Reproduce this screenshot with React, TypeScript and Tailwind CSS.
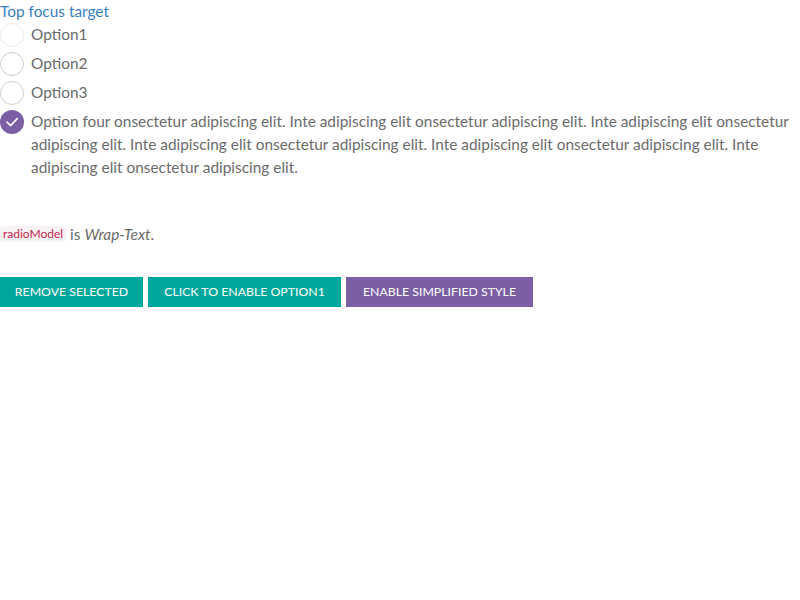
import React from "react";

function Radio({ label, checked, faint }: { label: string; checked?: boolean; faint?: boolean }) {
  return (
    <div className="flex items-start gap-[7px]">
      <div className="shrink-0 pt-[1px]">
        {checked ? (
          <div className="w-6 h-6 rounded-full bg-[#7b5ea3] flex items-center justify-center">
            <svg width="14" height="14" viewBox="0 0 14 14" fill="none">
              <path d="M2 7.2 L5.6 10.6 L12.2 3.6" stroke="white" strokeWidth="1.6" strokeLinecap="round" strokeLinejoin="round" />
            </svg>
          </div>
        ) : (
          <div className={"w-6 h-6 rounded-full bg-white border " + (faint ? "border-[#ececec]" : "border-[#cfcfcf]")} />
        )}
      </div>
      <div className="pt-[1px] text-[15.4px] leading-[23px] text-[#6b6b6b]">{label}</div>
    </div>
  );
}

export default function App() {
  return (
    <div className="w-[800px] h-[600px] bg-white" style={{ fontFamily: "Lato, 'Liberation Sans', sans-serif" }}>
      <div>
        <a className="text-[15.4px] leading-[22px] text-[#3a7fc0] block">Top focus target</a>
        <div className="flex flex-col gap-[4px]">
          <Radio label="Option1" faint />
          <Radio label="Option2" />
          <Radio label="Option3" />
          <Radio
            label="Option four onsectetur adipiscing elit. Inte adipiscing elit onsectetur adipiscing elit. Inte adipiscing elit onsectetur adipiscing elit. Inte adipiscing elit onsectetur adipiscing elit. Inte adipiscing elit onsectetur adipiscing elit. Inte adipiscing elit onsectetur adipiscing elit."
            checked
          />
        </div>
        <div className="mt-[44px] text-[15.4px] leading-[22px] text-[#6b6b6b] flex items-center">
          <code className="text-[12px] leading-[16px] px-[3px] rounded bg-[#f9f2f4] text-[#c7254e]" style={{ fontFamily: "Lato, 'Liberation Sans', sans-serif" }}>radioModel</code>
          <span className="ml-[4px]">is <em>Wrap-Text</em>.</span>
        </div>
        <div className="mt-[32px] flex gap-[5px]">
          <button className="h-[30px] w-[143px] bg-[#00a79d] text-white text-[12.3px] uppercase">Remove selected</button>
          <button className="h-[30px] w-[193px] bg-[#00a79d] text-white text-[12.3px] uppercase">Click to enable Option1</button>
          <button className="h-[30px] w-[187px] bg-[#7b5ea3] text-white text-[12.3px] uppercase">Enable simplified style</button>
        </div>
      </div>
    </div>
  );
}
